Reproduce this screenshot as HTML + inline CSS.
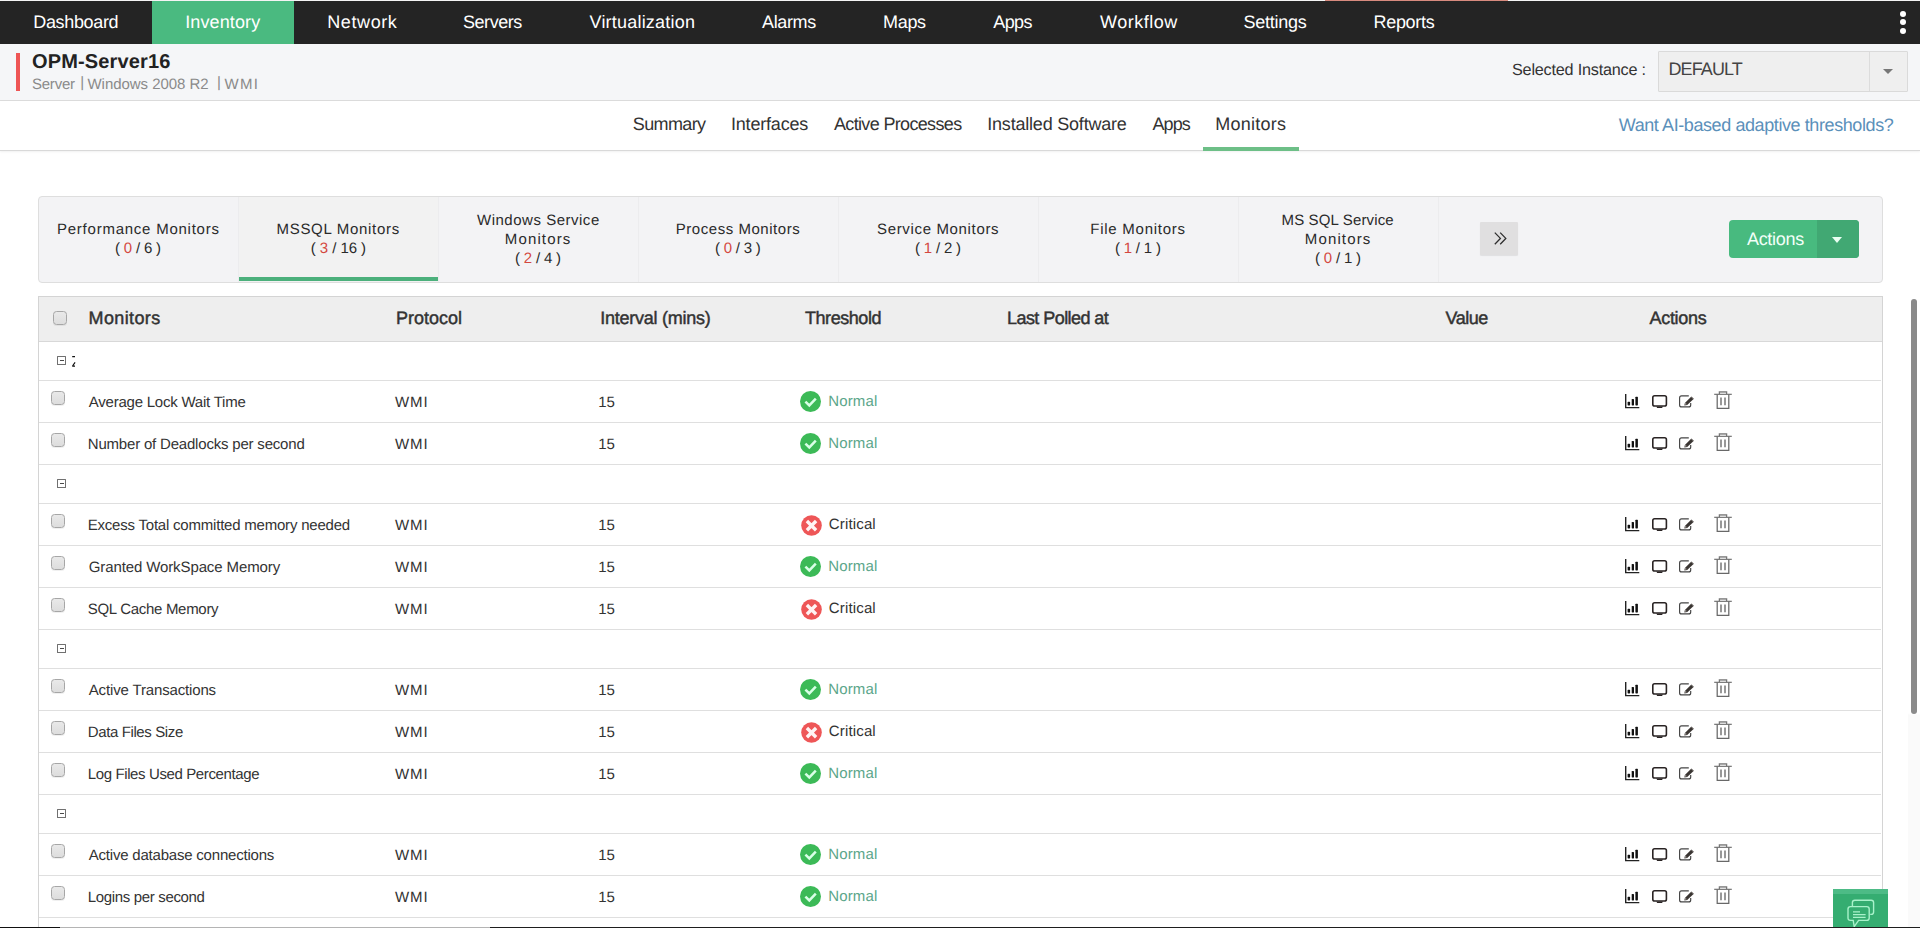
<!DOCTYPE html>
<html lang="en">
<head>
<meta charset="utf-8">
<title>OPM-Server16 - Monitors</title>
<style>
html,body{margin:0;padding:0;}
body{width:1920px;height:928px;overflow:hidden;background:#fff;position:relative;font-family:"Liberation Sans", sans-serif;text-rendering:geometricPrecision;}
.t{position:absolute;white-space:pre;display:block;}
.abs{position:absolute;}
nav{position:absolute;left:0;top:0;width:1920px;height:44px;background:#242424;}
nav .active{position:absolute;left:152px;top:1px;width:142px;height:43px;background:#4aba80;}
nav .topline{position:absolute;left:0;top:0;width:1920px;height:1px;background:#f4f4f4;}
nav .redline{position:absolute;left:1325px;top:0;width:183px;height:1px;background:#d88a7e;}
nav .dot{position:absolute;left:1900px;width:6px;height:6px;border-radius:50%;background:#fff;}
header{position:absolute;left:0;top:44px;width:1920px;height:56px;background:#f5f6f8;border-bottom:1px solid #dcdcdc;}
header .bar{position:absolute;left:16px;top:9px;width:4px;height:38px;background:#ee5555;}
.select{position:absolute;left:1658px;top:7px;width:248px;height:39px;border:1px solid #dadada;background:#efefef;border-radius:1px;}
.select .div{position:absolute;left:210px;top:0;width:1px;height:39px;background:#dcdcdc;}
.select .arr{position:absolute;left:224px;top:16.5px;width:0;height:0;border-left:5px solid transparent;border-right:5px solid transparent;border-top:5.5px solid #777;}
.subnav{position:absolute;left:0;top:101px;width:1920px;height:49px;background:#fff;border-bottom:1px solid #d9d9d9;box-shadow:0 1px 2px rgba(0,0,0,0.06);}
.subnav .ul{position:absolute;left:1203px;top:46px;width:96px;height:4px;background:#6dbf87;}
.panel{position:absolute;left:38px;top:196px;width:1843px;height:85px;border:1px solid #dedede;border-radius:4px;background:#f3f3f5;}
.panel .sep{position:absolute;top:0;width:1px;height:85px;background:#ececee;}
.panel .act{position:absolute;left:200px;top:0;width:199px;height:85px;background:#f2f2f2;}
.panel .ul{position:absolute;left:200px;top:80px;width:199px;height:4px;background:#4cb07c;}
.more{position:absolute;left:1441px;top:25px;width:38px;height:33px;background:#e0dfe0;box-shadow:0 1px 1px rgba(0,0,0,0.08);border-radius:1px;}
.btn{position:absolute;left:1690px;top:23px;width:130px;height:38px;border-radius:4px;background:#48ba7f;overflow:hidden;}
.btn .dd{position:absolute;left:88px;top:0;width:42px;height:38px;background:#41a873;}
.btn .arr{position:absolute;left:103px;top:17px;width:0;height:0;border-left:5px solid transparent;border-right:5px solid transparent;border-top:6px solid #eafff3;}
.table{position:absolute;left:38px;top:296px;width:1843px;height:640px;border:1px solid #d4d4d4;border-bottom:none;background:#fff;}
.thead{position:absolute;left:0;top:0;width:1843px;height:44px;background:#eeeeee;border-bottom:1px solid #d8d8d8;}
.row{position:absolute;left:0;width:1842px;border-bottom:1px solid #dfdfdf;}
.cb{position:absolute;width:12px;height:12px;border:1px solid #a6a6a6;border-radius:3.5px;background:linear-gradient(#e9e9e9,#dddddd);box-shadow:0 1px 0 rgba(0,0,0,0.06);}
.grp{position:absolute;left:18px;width:7px;height:7px;border:1px solid #707070;border-radius:0.5px;background:#fff;}
.grp i{position:absolute;left:1.5px;top:3px;width:4px;height:1px;background:#4a4a4a;}
.scroll{position:absolute;left:1908px;top:151px;width:12px;height:777px;background:linear-gradient(rgba(250,250,250,0) 0,rgba(250,250,250,0) 562px,#fafafa 564px,#fafafa 100%);}
.scroll b{position:absolute;left:3px;top:148px;width:6px;height:415px;border-radius:3px;background:#8a8a8a;}
.chat{position:absolute;left:1833px;top:889px;width:55px;height:39px;background:#35ad71;}
.chat .top{position:absolute;left:0;top:0;width:55px;height:4.5px;background:#4dbb86;}
.bline{position:absolute;left:0;top:927px;height:1px;}
svg{position:absolute;overflow:visible;}
</style>
</head>
<body>

<nav><div class="topline"></div><div class="active"></div><div class="redline"></div>
<a id="t0" class="t" style="left:33.25px;top:12.76px;font-size:18px;line-height:18px;letter-spacing:-0.338px;color:#ffffff;">Dashboard</a>
<a id="t1" class="t" style="left:185.25px;top:12.76px;font-size:18px;line-height:18px;letter-spacing:0.115px;color:#ffffff;">Inventory</a>
<a id="t2" class="t" style="left:327.25px;top:12.76px;font-size:18px;line-height:18px;letter-spacing:0.600px;color:#ffffff;">Network</a>
<a id="t3" class="t" style="left:463.00px;top:12.76px;font-size:18px;line-height:18px;letter-spacing:-0.450px;color:#ffffff;">Servers</a>
<a id="t4" class="t" style="left:589.50px;top:12.76px;font-size:18px;line-height:18px;letter-spacing:0.207px;color:#ffffff;">Virtualization</a>
<a id="t5" class="t" style="left:762.00px;top:12.76px;font-size:18px;line-height:18px;letter-spacing:-0.360px;color:#ffffff;">Alarms</a>
<a id="t6" class="t" style="left:883.00px;top:12.76px;font-size:18px;line-height:18px;letter-spacing:-0.300px;color:#ffffff;">Maps</a>
<a id="t7" class="t" style="left:993.25px;top:12.76px;font-size:18px;line-height:18px;letter-spacing:-0.600px;color:#ffffff;">Apps</a>
<a id="t8" class="t" style="left:1100.00px;top:12.76px;font-size:18px;line-height:18px;letter-spacing:0.514px;color:#ffffff;">Workflow</a>
<a id="t9" class="t" style="left:1243.50px;top:12.76px;font-size:18px;line-height:18px;letter-spacing:-0.263px;color:#ffffff;">Settings</a>
<a id="t10" class="t" style="left:1373.50px;top:12.76px;font-size:18px;line-height:18px;letter-spacing:-0.300px;color:#ffffff;">Reports</a>
<div class="dot" style="top:11px"></div>
<div class="dot" style="top:19.3px"></div>
<div class="dot" style="top:27.5px"></div>
</nav>

<header><div class="bar"></div>
<span id="t11" class="t" style="left:31.96px;top:8.06px;font-size:20px;line-height:20px;letter-spacing:0.143px;color:#222222;font-weight:700;">OPM-Server16</span>
<span id="t12" class="t" style="left:31.96px;top:33.29px;font-size:15px;line-height:15px;letter-spacing:-0.216px;color:#8a8a8a;">Server</span>
<span id="t13" class="t" style="left:80.22px;top:30.80px;font-size:15px;line-height:15px;letter-spacing:0.000px;color:#8a8a8a;">|</span>
<span id="t14" class="t" style="left:87.50px;top:33.29px;font-size:15px;line-height:15px;letter-spacing:-0.042px;color:#8a8a8a;">Windows 2008 R2</span>
<span id="t15" class="t" style="left:217.07px;top:30.80px;font-size:15px;line-height:15px;letter-spacing:0.000px;color:#8a8a8a;">|</span>
<span id="t16" class="t" style="left:224.57px;top:33.29px;font-size:15px;line-height:15px;letter-spacing:1.260px;color:#8a8a8a;">WMI</span>
<span id="t17" class="t" style="left:1512.00px;top:18.28px;font-size:16.2px;line-height:16.2px;letter-spacing:-0.200px;color:#333333;">Selected Instance :</span>
<div class="select"><div class="div"></div><div class="arr"></div></div>
<span id="t18" class="t" style="left:1668.50px;top:15.76px;font-size:18px;line-height:18px;letter-spacing:-0.900px;color:#444444;">DEFAULT</span>
</header>

<div class="subnav"><div class="ul"></div>
<a id="t19" class="t" style="left:632.75px;top:13.76px;font-size:18px;line-height:18px;letter-spacing:-0.607px;color:#333333;">Summary</a>
<a id="t20" class="t" style="left:731.00px;top:13.76px;font-size:18px;line-height:18px;letter-spacing:-0.200px;color:#333333;">Interfaces</a>
<a id="t21" class="t" style="left:834.00px;top:13.76px;font-size:18px;line-height:18px;letter-spacing:-0.660px;color:#333333;">Active Processes</a>
<a id="t22" class="t" style="left:987.25px;top:13.76px;font-size:18px;line-height:18px;letter-spacing:-0.204px;color:#333333;">Installed Software</a>
<a id="t23" class="t" style="left:1152.50px;top:13.76px;font-size:18px;line-height:18px;letter-spacing:-0.900px;color:#333333;">Apps</a>
<a id="t24" class="t" style="left:1215.25px;top:13.76px;font-size:18px;line-height:18px;letter-spacing:0.257px;color:#333333;">Monitors</a>
<a id="t25" class="t" style="left:1618.75px;top:14.76px;font-size:18px;line-height:18px;letter-spacing:-0.410px;color:#5b90ba;">Want AI-based adaptive thresholds?</a>
</div>

<div class="panel">
<div class="sep" style="left:199px"></div>
<div class="sep" style="left:399px"></div>
<div class="sep" style="left:599px"></div>
<div class="sep" style="left:799px"></div>
<div class="sep" style="left:999px"></div>
<div class="sep" style="left:1199px"></div>
<div class="sep" style="left:1399px"></div>
<div class="act"></div><div class="ul"></div>
<span id="t26" class="t" style="left:18.00px;top:25.29px;font-size:15px;line-height:15px;letter-spacing:0.759px;color:#2a2a2a;">Performance Monitors</span>
<span id="t27" class="t" style="left:75.91px;top:44.29px;font-size:15px;line-height:15px;letter-spacing:-0.169px;color:#2a2a2a;">( <span style="color:#d4483f">0</span> / 6 )</span>
<span id="t28" class="t" style="left:237.50px;top:25.29px;font-size:15px;line-height:15px;letter-spacing:0.695px;color:#2a2a2a;">MSSQL Monitors</span>
<span id="t29" class="t" style="left:271.82px;top:44.29px;font-size:15px;line-height:15px;letter-spacing:-0.075px;color:#2a2a2a;">( <span style="color:#d4483f">3</span> / 16 )</span>
<span id="t30" class="t" style="left:438.00px;top:16.29px;font-size:15px;line-height:15px;letter-spacing:0.514px;color:#2a2a2a;">Windows Service</span>
<span id="t31" class="t" style="left:465.75px;top:35.29px;font-size:15px;line-height:15px;letter-spacing:1.151px;color:#2a2a2a;">Monitors</span>
<span id="t32" class="t" style="left:475.91px;top:54.29px;font-size:15px;line-height:15px;letter-spacing:-0.169px;color:#2a2a2a;">( <span style="color:#d4483f">2</span> / 4 )</span>
<span id="t33" class="t" style="left:636.75px;top:25.29px;font-size:15px;line-height:15px;letter-spacing:0.540px;color:#2a2a2a;">Process Monitors</span>
<span id="t34" class="t" style="left:675.91px;top:44.29px;font-size:15px;line-height:15px;letter-spacing:-0.200px;color:#2a2a2a;">( <span style="color:#d4483f">0</span> / 3 )</span>
<span id="t35" class="t" style="left:838.00px;top:25.29px;font-size:15px;line-height:15px;letter-spacing:0.660px;color:#2a2a2a;">Service Monitors</span>
<span id="t36" class="t" style="left:875.91px;top:44.29px;font-size:15px;line-height:15px;letter-spacing:-0.169px;color:#2a2a2a;">( <span style="color:#d4483f">1</span> / 2 )</span>
<span id="t37" class="t" style="left:1051.25px;top:25.29px;font-size:15px;line-height:15px;letter-spacing:0.750px;color:#2a2a2a;">File Monitors</span>
<span id="t38" class="t" style="left:1075.91px;top:44.29px;font-size:15px;line-height:15px;letter-spacing:-0.194px;color:#2a2a2a;">( <span style="color:#d4483f">1</span> / 1 )</span>
<span id="t39" class="t" style="left:1242.50px;top:16.29px;font-size:15px;line-height:15px;letter-spacing:0.139px;color:#2a2a2a;">MS SQL Service</span>
<span id="t40" class="t" style="left:1265.75px;top:35.29px;font-size:15px;line-height:15px;letter-spacing:1.151px;color:#2a2a2a;">Monitors</span>
<span id="t41" class="t" style="left:1275.91px;top:54.29px;font-size:15px;line-height:15px;letter-spacing:-0.169px;color:#2a2a2a;">( <span style="color:#d4483f">0</span> / 1 )</span>
<div class="more"><svg style="left:14px;top:9.5px" width="13" height="13" viewBox="0 0 13 13"><path d="M0.8 0.6 L6.4 6.4 L0.8 12.2 M6.2 0.6 L11.8 6.4 L6.2 12.2" fill="none" stroke="#2e2e2e" stroke-width="1.3"/></svg></div>
<div class="btn"><div class="dd"></div><div class="arr"></div>
<span id="t42" class="t" style="left:17.95px;top:9.76px;font-size:18px;line-height:18px;letter-spacing:-0.300px;color:#f2fff8;">Actions</span>
</div>
</div>

<div class="table"><div class="thead">
<div class="cb" style="left:14px;top:14px"></div>
<span id="t43" class="t" style="left:49.50px;top:11.76px;font-size:18px;line-height:18px;letter-spacing:0.386px;color:#333333;-webkit-text-stroke:0.45px #333333;">Monitors</span>
<span id="t44" class="t" style="left:357.00px;top:11.76px;font-size:18px;line-height:18px;letter-spacing:0.000px;color:#333333;-webkit-text-stroke:0.45px #333333;">Protocol</span>
<span id="t45" class="t" style="left:561.25px;top:11.76px;font-size:18px;line-height:18px;letter-spacing:-0.258px;color:#333333;-webkit-text-stroke:0.45px #333333;">Interval (mins)</span>
<span id="t46" class="t" style="left:766.00px;top:11.76px;font-size:18px;line-height:18px;letter-spacing:-0.449px;color:#333333;-webkit-text-stroke:0.45px #333333;">Threshold</span>
<span id="t47" class="t" style="left:968.00px;top:11.76px;font-size:18px;line-height:18px;letter-spacing:-0.559px;color:#333333;-webkit-text-stroke:0.45px #333333;">Last Polled at</span>
<span id="t48" class="t" style="left:1406.50px;top:11.76px;font-size:18px;line-height:18px;letter-spacing:-0.456px;color:#333333;-webkit-text-stroke:0.45px #333333;">Value</span>
<span id="t49" class="t" style="left:1610.50px;top:11.76px;font-size:18px;line-height:18px;letter-spacing:-0.300px;color:#333333;-webkit-text-stroke:0.45px #333333;">Actions</span>
</div>
<div class="row" style="top:45px;height:38px">
<div class="grp" style="top:14px"><i></i></div>
<svg style="left:33px;top:14px" width="4" height="12" viewBox="0 0 4 12"><path d="M0.2 0.6 H3 M3.1 6.4 L0.5 10 M0.2 10.2 H3" stroke="#111" stroke-width="1.2" fill="none"/></svg>
</div>
<div class="row" style="top:84px;height:41px">
<div class="cb" style="left:12px;top:10px"></div>
<span id="t50" class="t" style="left:49.75px;top:14.29px;font-size:15px;line-height:15px;letter-spacing:-0.221px;color:#333333;">Average Lock Wait Time</span>
<span id="t51" class="t" style="left:356.00px;top:14.29px;font-size:15px;line-height:15px;letter-spacing:0.900px;color:#333333;">WMI</span>
<span id="t52" class="t" style="left:559.14px;top:14.29px;font-size:15px;line-height:15px;letter-spacing:0.000px;color:#333333;">15</span>
<svg style="left:761px;top:9.7px" width="21" height="21" viewBox="0 0 21 21"><circle cx="10.5" cy="10.5" r="10.5" fill="#3cba57"/><path d="M5.4 10.6 L9.3 14.4 L15.8 7.6" fill="none" stroke="#d9ffe6" stroke-width="2.5"/></svg>
<span id="t53" class="t" style="left:789.14px;top:13.29px;font-size:15px;line-height:15px;letter-spacing:0.180px;color:#5ba68a;">Normal</span>
<svg style="left:1585.6px;top:13px" width="15" height="15" viewBox="0 0 15 15"><path d="M0.7 0 V13.6 H14.3" fill="none" stroke="#222" stroke-width="1.4"/><rect x="2.6" y="7.8" width="2.5" height="3.6" rx="0.6" fill="#111"/><rect x="6.7" y="5.0" width="2.3" height="6.4" rx="0.6" fill="#111"/><rect x="10.4" y="2.7" width="2.5" height="8.7" rx="0.6" fill="#111"/></svg>
<svg style="left:1612.7px;top:14.2px" width="16" height="14" viewBox="0 0 16 14"><rect x="0.8" y="0.8" width="13.6" height="10.2" rx="1.8" fill="#fff" stroke="#2a2424" stroke-width="1.6"/><path d="M4.2 11.6 H11 L10 13 H5.2 Z" fill="#2a2424"/></svg>
<svg style="left:1639.6px;top:14px" width="16" height="14" viewBox="0 0 16 14"><path d="M9.8 0.9 H2.6 Q0.6 0.9 0.6 2.9 V9.9 Q0.6 11.9 2.6 11.9 H9.7 Q11.7 11.9 11.7 9.9 V8.1" fill="none" stroke="#444" stroke-width="1.15"/><path d="M5.3 10.5 L5.9 8.0 L12.4 1.5 L14.8 3.8 L8.2 10.0 Z" fill="#3a3532"/><path d="M12.0 2.0 L14.2 4.2" fill="none" stroke="#8a8480" stroke-width="0.5"/><circle cx="6.8" cy="8.9" r="0.55" fill="#f4f0ec"/></svg>
<svg style="left:1675px;top:10px" width="18" height="19" viewBox="0 0 18 19"><path d="M0.2 3.3 H17.8" stroke="#666" stroke-width="1.1" fill="none"/><path d="M5.4 3 V0.9 H12.6 V3" stroke="#777" stroke-width="1.3" fill="#ddd"/><path d="M3.2 3.6 V17.4 H14.8 V3.6" stroke="#686868" stroke-width="1.25" fill="none"/><path d="M7 6.4 V14.2 M11 6.4 V14.2" stroke="#777" stroke-width="1.5" fill="none"/></svg>
</div>
<div class="row" style="top:126px;height:41px">
<div class="cb" style="left:12px;top:10px"></div>
<span id="t54" class="t" style="left:48.75px;top:14.29px;font-size:15px;line-height:15px;letter-spacing:-0.193px;color:#333333;">Number of Deadlocks per second</span>
<span id="t55" class="t" style="left:356.00px;top:14.29px;font-size:15px;line-height:15px;letter-spacing:0.900px;color:#333333;">WMI</span>
<span id="t56" class="t" style="left:559.14px;top:14.29px;font-size:15px;line-height:15px;letter-spacing:0.000px;color:#333333;">15</span>
<svg style="left:761px;top:9.7px" width="21" height="21" viewBox="0 0 21 21"><circle cx="10.5" cy="10.5" r="10.5" fill="#3cba57"/><path d="M5.4 10.6 L9.3 14.4 L15.8 7.6" fill="none" stroke="#d9ffe6" stroke-width="2.5"/></svg>
<span id="t57" class="t" style="left:789.14px;top:13.29px;font-size:15px;line-height:15px;letter-spacing:0.180px;color:#5ba68a;">Normal</span>
<svg style="left:1585.6px;top:13px" width="15" height="15" viewBox="0 0 15 15"><path d="M0.7 0 V13.6 H14.3" fill="none" stroke="#222" stroke-width="1.4"/><rect x="2.6" y="7.8" width="2.5" height="3.6" rx="0.6" fill="#111"/><rect x="6.7" y="5.0" width="2.3" height="6.4" rx="0.6" fill="#111"/><rect x="10.4" y="2.7" width="2.5" height="8.7" rx="0.6" fill="#111"/></svg>
<svg style="left:1612.7px;top:14.2px" width="16" height="14" viewBox="0 0 16 14"><rect x="0.8" y="0.8" width="13.6" height="10.2" rx="1.8" fill="#fff" stroke="#2a2424" stroke-width="1.6"/><path d="M4.2 11.6 H11 L10 13 H5.2 Z" fill="#2a2424"/></svg>
<svg style="left:1639.6px;top:14px" width="16" height="14" viewBox="0 0 16 14"><path d="M9.8 0.9 H2.6 Q0.6 0.9 0.6 2.9 V9.9 Q0.6 11.9 2.6 11.9 H9.7 Q11.7 11.9 11.7 9.9 V8.1" fill="none" stroke="#444" stroke-width="1.15"/><path d="M5.3 10.5 L5.9 8.0 L12.4 1.5 L14.8 3.8 L8.2 10.0 Z" fill="#3a3532"/><path d="M12.0 2.0 L14.2 4.2" fill="none" stroke="#8a8480" stroke-width="0.5"/><circle cx="6.8" cy="8.9" r="0.55" fill="#f4f0ec"/></svg>
<svg style="left:1675px;top:10px" width="18" height="19" viewBox="0 0 18 19"><path d="M0.2 3.3 H17.8" stroke="#666" stroke-width="1.1" fill="none"/><path d="M5.4 3 V0.9 H12.6 V3" stroke="#777" stroke-width="1.3" fill="#ddd"/><path d="M3.2 3.6 V17.4 H14.8 V3.6" stroke="#686868" stroke-width="1.25" fill="none"/><path d="M7 6.4 V14.2 M11 6.4 V14.2" stroke="#777" stroke-width="1.5" fill="none"/></svg>
</div>
<div class="row" style="top:168px;height:38px">
<div class="grp" style="top:14px"><i></i></div>
</div>
<div class="row" style="top:207px;height:41px">
<div class="cb" style="left:12px;top:10px"></div>
<span id="t58" class="t" style="left:48.75px;top:14.29px;font-size:15px;line-height:15px;letter-spacing:-0.213px;color:#333333;">Excess Total committed memory needed</span>
<span id="t59" class="t" style="left:356.00px;top:14.29px;font-size:15px;line-height:15px;letter-spacing:0.900px;color:#333333;">WMI</span>
<span id="t60" class="t" style="left:559.14px;top:14.29px;font-size:15px;line-height:15px;letter-spacing:0.000px;color:#333333;">15</span>
<svg style="left:761.8px;top:10.6px" width="21" height="21" viewBox="0 0 21 21"><circle cx="10.5" cy="10.5" r="10.3" fill="#ee5657"/><path d="M5.9 6.0 L15.1 15.2 M15.1 6.0 L5.9 15.2" fill="none" stroke="#fff3f3" stroke-width="3.4"/></svg>
<span id="t61" class="t" style="left:789.84px;top:13.29px;font-size:15px;line-height:15px;letter-spacing:0.148px;color:#333333;">Critical</span>
<svg style="left:1585.6px;top:13px" width="15" height="15" viewBox="0 0 15 15"><path d="M0.7 0 V13.6 H14.3" fill="none" stroke="#222" stroke-width="1.4"/><rect x="2.6" y="7.8" width="2.5" height="3.6" rx="0.6" fill="#111"/><rect x="6.7" y="5.0" width="2.3" height="6.4" rx="0.6" fill="#111"/><rect x="10.4" y="2.7" width="2.5" height="8.7" rx="0.6" fill="#111"/></svg>
<svg style="left:1612.7px;top:14.2px" width="16" height="14" viewBox="0 0 16 14"><rect x="0.8" y="0.8" width="13.6" height="10.2" rx="1.8" fill="#fff" stroke="#2a2424" stroke-width="1.6"/><path d="M4.2 11.6 H11 L10 13 H5.2 Z" fill="#2a2424"/></svg>
<svg style="left:1639.6px;top:14px" width="16" height="14" viewBox="0 0 16 14"><path d="M9.8 0.9 H2.6 Q0.6 0.9 0.6 2.9 V9.9 Q0.6 11.9 2.6 11.9 H9.7 Q11.7 11.9 11.7 9.9 V8.1" fill="none" stroke="#444" stroke-width="1.15"/><path d="M5.3 10.5 L5.9 8.0 L12.4 1.5 L14.8 3.8 L8.2 10.0 Z" fill="#3a3532"/><path d="M12.0 2.0 L14.2 4.2" fill="none" stroke="#8a8480" stroke-width="0.5"/><circle cx="6.8" cy="8.9" r="0.55" fill="#f4f0ec"/></svg>
<svg style="left:1675px;top:10px" width="18" height="19" viewBox="0 0 18 19"><path d="M0.2 3.3 H17.8" stroke="#666" stroke-width="1.1" fill="none"/><path d="M5.4 3 V0.9 H12.6 V3" stroke="#777" stroke-width="1.3" fill="#ddd"/><path d="M3.2 3.6 V17.4 H14.8 V3.6" stroke="#686868" stroke-width="1.25" fill="none"/><path d="M7 6.4 V14.2 M11 6.4 V14.2" stroke="#777" stroke-width="1.5" fill="none"/></svg>
</div>
<div class="row" style="top:249px;height:41px">
<div class="cb" style="left:12px;top:10px"></div>
<span id="t62" class="t" style="left:49.75px;top:14.29px;font-size:15px;line-height:15px;letter-spacing:-0.111px;color:#333333;">Granted WorkSpace Memory</span>
<span id="t63" class="t" style="left:356.00px;top:14.29px;font-size:15px;line-height:15px;letter-spacing:0.900px;color:#333333;">WMI</span>
<span id="t64" class="t" style="left:559.14px;top:14.29px;font-size:15px;line-height:15px;letter-spacing:0.000px;color:#333333;">15</span>
<svg style="left:761px;top:9.7px" width="21" height="21" viewBox="0 0 21 21"><circle cx="10.5" cy="10.5" r="10.5" fill="#3cba57"/><path d="M5.4 10.6 L9.3 14.4 L15.8 7.6" fill="none" stroke="#d9ffe6" stroke-width="2.5"/></svg>
<span id="t65" class="t" style="left:789.14px;top:13.29px;font-size:15px;line-height:15px;letter-spacing:0.180px;color:#5ba68a;">Normal</span>
<svg style="left:1585.6px;top:13px" width="15" height="15" viewBox="0 0 15 15"><path d="M0.7 0 V13.6 H14.3" fill="none" stroke="#222" stroke-width="1.4"/><rect x="2.6" y="7.8" width="2.5" height="3.6" rx="0.6" fill="#111"/><rect x="6.7" y="5.0" width="2.3" height="6.4" rx="0.6" fill="#111"/><rect x="10.4" y="2.7" width="2.5" height="8.7" rx="0.6" fill="#111"/></svg>
<svg style="left:1612.7px;top:14.2px" width="16" height="14" viewBox="0 0 16 14"><rect x="0.8" y="0.8" width="13.6" height="10.2" rx="1.8" fill="#fff" stroke="#2a2424" stroke-width="1.6"/><path d="M4.2 11.6 H11 L10 13 H5.2 Z" fill="#2a2424"/></svg>
<svg style="left:1639.6px;top:14px" width="16" height="14" viewBox="0 0 16 14"><path d="M9.8 0.9 H2.6 Q0.6 0.9 0.6 2.9 V9.9 Q0.6 11.9 2.6 11.9 H9.7 Q11.7 11.9 11.7 9.9 V8.1" fill="none" stroke="#444" stroke-width="1.15"/><path d="M5.3 10.5 L5.9 8.0 L12.4 1.5 L14.8 3.8 L8.2 10.0 Z" fill="#3a3532"/><path d="M12.0 2.0 L14.2 4.2" fill="none" stroke="#8a8480" stroke-width="0.5"/><circle cx="6.8" cy="8.9" r="0.55" fill="#f4f0ec"/></svg>
<svg style="left:1675px;top:10px" width="18" height="19" viewBox="0 0 18 19"><path d="M0.2 3.3 H17.8" stroke="#666" stroke-width="1.1" fill="none"/><path d="M5.4 3 V0.9 H12.6 V3" stroke="#777" stroke-width="1.3" fill="#ddd"/><path d="M3.2 3.6 V17.4 H14.8 V3.6" stroke="#686868" stroke-width="1.25" fill="none"/><path d="M7 6.4 V14.2 M11 6.4 V14.2" stroke="#777" stroke-width="1.5" fill="none"/></svg>
</div>
<div class="row" style="top:291px;height:41px">
<div class="cb" style="left:12px;top:10px"></div>
<span id="t66" class="t" style="left:48.75px;top:14.29px;font-size:15px;line-height:15px;letter-spacing:-0.300px;color:#333333;">SQL Cache Memory</span>
<span id="t67" class="t" style="left:356.00px;top:14.29px;font-size:15px;line-height:15px;letter-spacing:0.900px;color:#333333;">WMI</span>
<span id="t68" class="t" style="left:559.14px;top:14.29px;font-size:15px;line-height:15px;letter-spacing:0.000px;color:#333333;">15</span>
<svg style="left:761.8px;top:10.6px" width="21" height="21" viewBox="0 0 21 21"><circle cx="10.5" cy="10.5" r="10.3" fill="#ee5657"/><path d="M5.9 6.0 L15.1 15.2 M15.1 6.0 L5.9 15.2" fill="none" stroke="#fff3f3" stroke-width="3.4"/></svg>
<span id="t69" class="t" style="left:789.84px;top:13.29px;font-size:15px;line-height:15px;letter-spacing:0.148px;color:#333333;">Critical</span>
<svg style="left:1585.6px;top:13px" width="15" height="15" viewBox="0 0 15 15"><path d="M0.7 0 V13.6 H14.3" fill="none" stroke="#222" stroke-width="1.4"/><rect x="2.6" y="7.8" width="2.5" height="3.6" rx="0.6" fill="#111"/><rect x="6.7" y="5.0" width="2.3" height="6.4" rx="0.6" fill="#111"/><rect x="10.4" y="2.7" width="2.5" height="8.7" rx="0.6" fill="#111"/></svg>
<svg style="left:1612.7px;top:14.2px" width="16" height="14" viewBox="0 0 16 14"><rect x="0.8" y="0.8" width="13.6" height="10.2" rx="1.8" fill="#fff" stroke="#2a2424" stroke-width="1.6"/><path d="M4.2 11.6 H11 L10 13 H5.2 Z" fill="#2a2424"/></svg>
<svg style="left:1639.6px;top:14px" width="16" height="14" viewBox="0 0 16 14"><path d="M9.8 0.9 H2.6 Q0.6 0.9 0.6 2.9 V9.9 Q0.6 11.9 2.6 11.9 H9.7 Q11.7 11.9 11.7 9.9 V8.1" fill="none" stroke="#444" stroke-width="1.15"/><path d="M5.3 10.5 L5.9 8.0 L12.4 1.5 L14.8 3.8 L8.2 10.0 Z" fill="#3a3532"/><path d="M12.0 2.0 L14.2 4.2" fill="none" stroke="#8a8480" stroke-width="0.5"/><circle cx="6.8" cy="8.9" r="0.55" fill="#f4f0ec"/></svg>
<svg style="left:1675px;top:10px" width="18" height="19" viewBox="0 0 18 19"><path d="M0.2 3.3 H17.8" stroke="#666" stroke-width="1.1" fill="none"/><path d="M5.4 3 V0.9 H12.6 V3" stroke="#777" stroke-width="1.3" fill="#ddd"/><path d="M3.2 3.6 V17.4 H14.8 V3.6" stroke="#686868" stroke-width="1.25" fill="none"/><path d="M7 6.4 V14.2 M11 6.4 V14.2" stroke="#777" stroke-width="1.5" fill="none"/></svg>
</div>
<div class="row" style="top:333px;height:38px">
<div class="grp" style="top:14px"><i></i></div>
</div>
<div class="row" style="top:372px;height:41px">
<div class="cb" style="left:12px;top:10px"></div>
<span id="t70" class="t" style="left:49.75px;top:14.29px;font-size:15px;line-height:15px;letter-spacing:-0.150px;color:#333333;">Active Transactions</span>
<span id="t71" class="t" style="left:356.00px;top:14.29px;font-size:15px;line-height:15px;letter-spacing:0.900px;color:#333333;">WMI</span>
<span id="t72" class="t" style="left:559.14px;top:14.29px;font-size:15px;line-height:15px;letter-spacing:0.000px;color:#333333;">15</span>
<svg style="left:761px;top:9.7px" width="21" height="21" viewBox="0 0 21 21"><circle cx="10.5" cy="10.5" r="10.5" fill="#3cba57"/><path d="M5.4 10.6 L9.3 14.4 L15.8 7.6" fill="none" stroke="#d9ffe6" stroke-width="2.5"/></svg>
<span id="t73" class="t" style="left:789.14px;top:13.29px;font-size:15px;line-height:15px;letter-spacing:0.180px;color:#5ba68a;">Normal</span>
<svg style="left:1585.6px;top:13px" width="15" height="15" viewBox="0 0 15 15"><path d="M0.7 0 V13.6 H14.3" fill="none" stroke="#222" stroke-width="1.4"/><rect x="2.6" y="7.8" width="2.5" height="3.6" rx="0.6" fill="#111"/><rect x="6.7" y="5.0" width="2.3" height="6.4" rx="0.6" fill="#111"/><rect x="10.4" y="2.7" width="2.5" height="8.7" rx="0.6" fill="#111"/></svg>
<svg style="left:1612.7px;top:14.2px" width="16" height="14" viewBox="0 0 16 14"><rect x="0.8" y="0.8" width="13.6" height="10.2" rx="1.8" fill="#fff" stroke="#2a2424" stroke-width="1.6"/><path d="M4.2 11.6 H11 L10 13 H5.2 Z" fill="#2a2424"/></svg>
<svg style="left:1639.6px;top:14px" width="16" height="14" viewBox="0 0 16 14"><path d="M9.8 0.9 H2.6 Q0.6 0.9 0.6 2.9 V9.9 Q0.6 11.9 2.6 11.9 H9.7 Q11.7 11.9 11.7 9.9 V8.1" fill="none" stroke="#444" stroke-width="1.15"/><path d="M5.3 10.5 L5.9 8.0 L12.4 1.5 L14.8 3.8 L8.2 10.0 Z" fill="#3a3532"/><path d="M12.0 2.0 L14.2 4.2" fill="none" stroke="#8a8480" stroke-width="0.5"/><circle cx="6.8" cy="8.9" r="0.55" fill="#f4f0ec"/></svg>
<svg style="left:1675px;top:10px" width="18" height="19" viewBox="0 0 18 19"><path d="M0.2 3.3 H17.8" stroke="#666" stroke-width="1.1" fill="none"/><path d="M5.4 3 V0.9 H12.6 V3" stroke="#777" stroke-width="1.3" fill="#ddd"/><path d="M3.2 3.6 V17.4 H14.8 V3.6" stroke="#686868" stroke-width="1.25" fill="none"/><path d="M7 6.4 V14.2 M11 6.4 V14.2" stroke="#777" stroke-width="1.5" fill="none"/></svg>
</div>
<div class="row" style="top:414px;height:41px">
<div class="cb" style="left:12px;top:10px"></div>
<span id="t74" class="t" style="left:48.75px;top:14.29px;font-size:15px;line-height:15px;letter-spacing:-0.385px;color:#333333;">Data Files Size</span>
<span id="t75" class="t" style="left:356.00px;top:14.29px;font-size:15px;line-height:15px;letter-spacing:0.900px;color:#333333;">WMI</span>
<span id="t76" class="t" style="left:559.14px;top:14.29px;font-size:15px;line-height:15px;letter-spacing:0.000px;color:#333333;">15</span>
<svg style="left:761.8px;top:10.6px" width="21" height="21" viewBox="0 0 21 21"><circle cx="10.5" cy="10.5" r="10.3" fill="#ee5657"/><path d="M5.9 6.0 L15.1 15.2 M15.1 6.0 L5.9 15.2" fill="none" stroke="#fff3f3" stroke-width="3.4"/></svg>
<span id="t77" class="t" style="left:789.84px;top:13.29px;font-size:15px;line-height:15px;letter-spacing:0.148px;color:#333333;">Critical</span>
<svg style="left:1585.6px;top:13px" width="15" height="15" viewBox="0 0 15 15"><path d="M0.7 0 V13.6 H14.3" fill="none" stroke="#222" stroke-width="1.4"/><rect x="2.6" y="7.8" width="2.5" height="3.6" rx="0.6" fill="#111"/><rect x="6.7" y="5.0" width="2.3" height="6.4" rx="0.6" fill="#111"/><rect x="10.4" y="2.7" width="2.5" height="8.7" rx="0.6" fill="#111"/></svg>
<svg style="left:1612.7px;top:14.2px" width="16" height="14" viewBox="0 0 16 14"><rect x="0.8" y="0.8" width="13.6" height="10.2" rx="1.8" fill="#fff" stroke="#2a2424" stroke-width="1.6"/><path d="M4.2 11.6 H11 L10 13 H5.2 Z" fill="#2a2424"/></svg>
<svg style="left:1639.6px;top:14px" width="16" height="14" viewBox="0 0 16 14"><path d="M9.8 0.9 H2.6 Q0.6 0.9 0.6 2.9 V9.9 Q0.6 11.9 2.6 11.9 H9.7 Q11.7 11.9 11.7 9.9 V8.1" fill="none" stroke="#444" stroke-width="1.15"/><path d="M5.3 10.5 L5.9 8.0 L12.4 1.5 L14.8 3.8 L8.2 10.0 Z" fill="#3a3532"/><path d="M12.0 2.0 L14.2 4.2" fill="none" stroke="#8a8480" stroke-width="0.5"/><circle cx="6.8" cy="8.9" r="0.55" fill="#f4f0ec"/></svg>
<svg style="left:1675px;top:10px" width="18" height="19" viewBox="0 0 18 19"><path d="M0.2 3.3 H17.8" stroke="#666" stroke-width="1.1" fill="none"/><path d="M5.4 3 V0.9 H12.6 V3" stroke="#777" stroke-width="1.3" fill="#ddd"/><path d="M3.2 3.6 V17.4 H14.8 V3.6" stroke="#686868" stroke-width="1.25" fill="none"/><path d="M7 6.4 V14.2 M11 6.4 V14.2" stroke="#777" stroke-width="1.5" fill="none"/></svg>
</div>
<div class="row" style="top:456px;height:41px">
<div class="cb" style="left:12px;top:10px"></div>
<span id="t78" class="t" style="left:48.75px;top:14.29px;font-size:15px;line-height:15px;letter-spacing:-0.382px;color:#333333;">Log Files Used Percentage</span>
<span id="t79" class="t" style="left:356.00px;top:14.29px;font-size:15px;line-height:15px;letter-spacing:0.900px;color:#333333;">WMI</span>
<span id="t80" class="t" style="left:559.14px;top:14.29px;font-size:15px;line-height:15px;letter-spacing:0.000px;color:#333333;">15</span>
<svg style="left:761px;top:9.7px" width="21" height="21" viewBox="0 0 21 21"><circle cx="10.5" cy="10.5" r="10.5" fill="#3cba57"/><path d="M5.4 10.6 L9.3 14.4 L15.8 7.6" fill="none" stroke="#d9ffe6" stroke-width="2.5"/></svg>
<span id="t81" class="t" style="left:789.14px;top:13.29px;font-size:15px;line-height:15px;letter-spacing:0.180px;color:#5ba68a;">Normal</span>
<svg style="left:1585.6px;top:13px" width="15" height="15" viewBox="0 0 15 15"><path d="M0.7 0 V13.6 H14.3" fill="none" stroke="#222" stroke-width="1.4"/><rect x="2.6" y="7.8" width="2.5" height="3.6" rx="0.6" fill="#111"/><rect x="6.7" y="5.0" width="2.3" height="6.4" rx="0.6" fill="#111"/><rect x="10.4" y="2.7" width="2.5" height="8.7" rx="0.6" fill="#111"/></svg>
<svg style="left:1612.7px;top:14.2px" width="16" height="14" viewBox="0 0 16 14"><rect x="0.8" y="0.8" width="13.6" height="10.2" rx="1.8" fill="#fff" stroke="#2a2424" stroke-width="1.6"/><path d="M4.2 11.6 H11 L10 13 H5.2 Z" fill="#2a2424"/></svg>
<svg style="left:1639.6px;top:14px" width="16" height="14" viewBox="0 0 16 14"><path d="M9.8 0.9 H2.6 Q0.6 0.9 0.6 2.9 V9.9 Q0.6 11.9 2.6 11.9 H9.7 Q11.7 11.9 11.7 9.9 V8.1" fill="none" stroke="#444" stroke-width="1.15"/><path d="M5.3 10.5 L5.9 8.0 L12.4 1.5 L14.8 3.8 L8.2 10.0 Z" fill="#3a3532"/><path d="M12.0 2.0 L14.2 4.2" fill="none" stroke="#8a8480" stroke-width="0.5"/><circle cx="6.8" cy="8.9" r="0.55" fill="#f4f0ec"/></svg>
<svg style="left:1675px;top:10px" width="18" height="19" viewBox="0 0 18 19"><path d="M0.2 3.3 H17.8" stroke="#666" stroke-width="1.1" fill="none"/><path d="M5.4 3 V0.9 H12.6 V3" stroke="#777" stroke-width="1.3" fill="#ddd"/><path d="M3.2 3.6 V17.4 H14.8 V3.6" stroke="#686868" stroke-width="1.25" fill="none"/><path d="M7 6.4 V14.2 M11 6.4 V14.2" stroke="#777" stroke-width="1.5" fill="none"/></svg>
</div>
<div class="row" style="top:498px;height:38px">
<div class="grp" style="top:14px"><i></i></div>
</div>
<div class="row" style="top:537px;height:41px">
<div class="cb" style="left:12px;top:10px"></div>
<span id="t82" class="t" style="left:49.75px;top:14.29px;font-size:15px;line-height:15px;letter-spacing:-0.208px;color:#333333;">Active database connections</span>
<span id="t83" class="t" style="left:356.00px;top:14.29px;font-size:15px;line-height:15px;letter-spacing:0.900px;color:#333333;">WMI</span>
<span id="t84" class="t" style="left:559.14px;top:14.29px;font-size:15px;line-height:15px;letter-spacing:0.000px;color:#333333;">15</span>
<svg style="left:761px;top:9.7px" width="21" height="21" viewBox="0 0 21 21"><circle cx="10.5" cy="10.5" r="10.5" fill="#3cba57"/><path d="M5.4 10.6 L9.3 14.4 L15.8 7.6" fill="none" stroke="#d9ffe6" stroke-width="2.5"/></svg>
<span id="t85" class="t" style="left:789.14px;top:13.29px;font-size:15px;line-height:15px;letter-spacing:0.180px;color:#5ba68a;">Normal</span>
<svg style="left:1585.6px;top:13px" width="15" height="15" viewBox="0 0 15 15"><path d="M0.7 0 V13.6 H14.3" fill="none" stroke="#222" stroke-width="1.4"/><rect x="2.6" y="7.8" width="2.5" height="3.6" rx="0.6" fill="#111"/><rect x="6.7" y="5.0" width="2.3" height="6.4" rx="0.6" fill="#111"/><rect x="10.4" y="2.7" width="2.5" height="8.7" rx="0.6" fill="#111"/></svg>
<svg style="left:1612.7px;top:14.2px" width="16" height="14" viewBox="0 0 16 14"><rect x="0.8" y="0.8" width="13.6" height="10.2" rx="1.8" fill="#fff" stroke="#2a2424" stroke-width="1.6"/><path d="M4.2 11.6 H11 L10 13 H5.2 Z" fill="#2a2424"/></svg>
<svg style="left:1639.6px;top:14px" width="16" height="14" viewBox="0 0 16 14"><path d="M9.8 0.9 H2.6 Q0.6 0.9 0.6 2.9 V9.9 Q0.6 11.9 2.6 11.9 H9.7 Q11.7 11.9 11.7 9.9 V8.1" fill="none" stroke="#444" stroke-width="1.15"/><path d="M5.3 10.5 L5.9 8.0 L12.4 1.5 L14.8 3.8 L8.2 10.0 Z" fill="#3a3532"/><path d="M12.0 2.0 L14.2 4.2" fill="none" stroke="#8a8480" stroke-width="0.5"/><circle cx="6.8" cy="8.9" r="0.55" fill="#f4f0ec"/></svg>
<svg style="left:1675px;top:10px" width="18" height="19" viewBox="0 0 18 19"><path d="M0.2 3.3 H17.8" stroke="#666" stroke-width="1.1" fill="none"/><path d="M5.4 3 V0.9 H12.6 V3" stroke="#777" stroke-width="1.3" fill="#ddd"/><path d="M3.2 3.6 V17.4 H14.8 V3.6" stroke="#686868" stroke-width="1.25" fill="none"/><path d="M7 6.4 V14.2 M11 6.4 V14.2" stroke="#777" stroke-width="1.5" fill="none"/></svg>
</div>
<div class="row" style="top:579px;height:41px">
<div class="cb" style="left:12px;top:10px"></div>
<span id="t86" class="t" style="left:48.75px;top:14.29px;font-size:15px;line-height:15px;letter-spacing:-0.337px;color:#333333;">Logins per second</span>
<span id="t87" class="t" style="left:356.00px;top:14.29px;font-size:15px;line-height:15px;letter-spacing:0.900px;color:#333333;">WMI</span>
<span id="t88" class="t" style="left:559.14px;top:14.29px;font-size:15px;line-height:15px;letter-spacing:0.000px;color:#333333;">15</span>
<svg style="left:761px;top:9.7px" width="21" height="21" viewBox="0 0 21 21"><circle cx="10.5" cy="10.5" r="10.5" fill="#3cba57"/><path d="M5.4 10.6 L9.3 14.4 L15.8 7.6" fill="none" stroke="#d9ffe6" stroke-width="2.5"/></svg>
<span id="t89" class="t" style="left:789.14px;top:13.29px;font-size:15px;line-height:15px;letter-spacing:0.180px;color:#5ba68a;">Normal</span>
<svg style="left:1585.6px;top:13px" width="15" height="15" viewBox="0 0 15 15"><path d="M0.7 0 V13.6 H14.3" fill="none" stroke="#222" stroke-width="1.4"/><rect x="2.6" y="7.8" width="2.5" height="3.6" rx="0.6" fill="#111"/><rect x="6.7" y="5.0" width="2.3" height="6.4" rx="0.6" fill="#111"/><rect x="10.4" y="2.7" width="2.5" height="8.7" rx="0.6" fill="#111"/></svg>
<svg style="left:1612.7px;top:14.2px" width="16" height="14" viewBox="0 0 16 14"><rect x="0.8" y="0.8" width="13.6" height="10.2" rx="1.8" fill="#fff" stroke="#2a2424" stroke-width="1.6"/><path d="M4.2 11.6 H11 L10 13 H5.2 Z" fill="#2a2424"/></svg>
<svg style="left:1639.6px;top:14px" width="16" height="14" viewBox="0 0 16 14"><path d="M9.8 0.9 H2.6 Q0.6 0.9 0.6 2.9 V9.9 Q0.6 11.9 2.6 11.9 H9.7 Q11.7 11.9 11.7 9.9 V8.1" fill="none" stroke="#444" stroke-width="1.15"/><path d="M5.3 10.5 L5.9 8.0 L12.4 1.5 L14.8 3.8 L8.2 10.0 Z" fill="#3a3532"/><path d="M12.0 2.0 L14.2 4.2" fill="none" stroke="#8a8480" stroke-width="0.5"/><circle cx="6.8" cy="8.9" r="0.55" fill="#f4f0ec"/></svg>
<svg style="left:1675px;top:10px" width="18" height="19" viewBox="0 0 18 19"><path d="M0.2 3.3 H17.8" stroke="#666" stroke-width="1.1" fill="none"/><path d="M5.4 3 V0.9 H12.6 V3" stroke="#777" stroke-width="1.3" fill="#ddd"/><path d="M3.2 3.6 V17.4 H14.8 V3.6" stroke="#686868" stroke-width="1.25" fill="none"/><path d="M7 6.4 V14.2 M11 6.4 V14.2" stroke="#777" stroke-width="1.5" fill="none"/></svg>
</div>
<div class="row" style="top:621px;height:41px">
</div>
</div>

<div class="scroll"><b></b></div>
<div class="chat"><div class="top"></div><svg style="left:13.8px;top:9.7px" width="29" height="29" viewBox="0 0 29 29"><path d="M5.4 7.2 V3.6 Q5.4 1.2 7.8 1.2 H24.2 Q26.6 1.2 26.6 3.6 V13 Q26.6 15.4 24.2 15.4 H23.2" fill="none" stroke="#a9f2cb" stroke-width="1.4"/><path d="M3.4 7.6 H19.8 Q22.2 7.6 22.2 10 V19 Q22.2 21.4 19.8 21.4 H11.6 L7.2 27.6 L6.2 21.4 H3.4 Q1 21.4 1 19 V10 Q1 7.6 3.4 7.6 Z" fill="none" stroke="#a9f2cb" stroke-width="1.4"/><path d="M6 12.9 H13 M6 15.6 H18.6 M6 18.4 H18.6" fill="none" stroke="#a9f2cb" stroke-width="1.4"/></svg></div>
<div class="bline" style="left:0;width:60px;background:#111"></div>
<div class="bline" style="left:60px;width:430px;background:#b4b4b4"></div>
<div class="bline" style="left:490px;width:1430px;background:#1e1e1e"></div>
</body>
</html>
